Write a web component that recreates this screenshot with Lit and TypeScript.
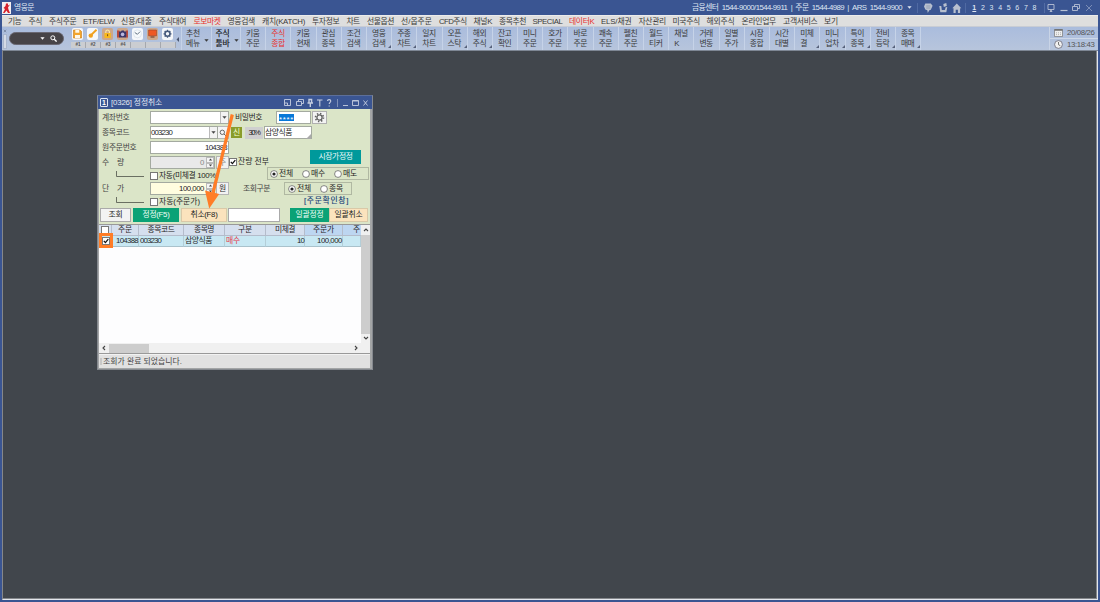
import { LitElement, html, css, svg, nothing } from "lit";
import { customElement, property } from "lit/decorators.js";

/** Single-line text whose tracking is adjusted to fill a given width. */
@customElement("fit-text")
class FitText extends LitElement {
  static styles = css`
    :host { display: block; flex: none; white-space: pre; overflow: visible; }
    .t { display: inline-block; white-space: pre; }
  `;
  @property({ type: Number }) w = 0;
  @property() text = "";
  render() {
    return html`<span class="t">${this.text}</span>`;
  }
  updated() {
    const s = this.renderRoot.querySelector(".t") as HTMLElement;
    s.style.letterSpacing = "0px";
    const n = [...this.text].length;
    const natural = s.getBoundingClientRect().width;
    s.style.letterSpacing = (this.w - natural) / n + "px";
    this.style.width = this.w + "px";
  }
}

const t = (text: string, w: number, cls = "") =>
  html`<fit-text class=${cls} .text=${text} .w=${w}></fit-text>`;

const menu: [string, number, number, boolean?][] = [
  ["기능", 8, 13], ["주식", 28.5, 13.5], ["주식주문", 49, 27.5], ["ETF/ELW", 83, 31.5],
  ["신용/대출", 121, 31], ["주식대여", 159, 27], ["로보마켓", 193.5, 27, true], ["영웅검색", 227.5, 27.5],
  ["캐치(KATCH)", 262, 43], ["투자정보", 312, 27.5], ["차트", 346.5, 13], ["선물옵션", 367, 27],
  ["선/옵주문", 401, 31], ["CFD주식", 439, 27.5], ["채널K", 473.5, 18.5], ["종목추천", 499, 27],
  ["SPECIAL", 532.5, 30], ["데이터K", 569, 25.5, true], ["ELS/채권", 601, 30.5], ["자산관리", 638.5, 27.5],
  ["미국주식", 672.5, 27.5], ["해외주식", 706.5, 28], ["온라인업무", 741.5, 34.5], ["고객서비스", 783, 34.5],
  ["보기", 824, 14],
];

const tools: [string, string, boolean?, boolean?][] = [
  ["키움", "주문"], ["주식", "종합", false, true], ["키움", "현재"], ["관심", "종목"], ["조건", "검색"],
  ["영웅", "검색", true], ["주종", "차트", true], ["일지", "차트"], ["오픈", "스탁", true], ["해외", "주식", true],
  ["잔고", "확인"], ["미니", "주문"], ["호가", "주문"], ["바로", "주문"], ["쾌속", "주문"], ["펠친", "주문"],
  ["월드", "티커"], ["채널", "K"], ["거래", "변동"], ["일별", "주가"], ["시장", "종합"], ["시간", "대별"],
  ["미체", "결", true], ["미니", "업차", true], ["특이", "종목", true], ["전비", "등락", true], ["종목", "매매", true],
];

const quick = [
  svg`<path d="M1.5 2h6.5l1.5 1.5V10h-8z" fill="#f3a52c" stroke="#c97a18" stroke-width=".6"/><path d="M3.3 2h4v2.7h-4zM3 7h5v3H3z" fill="#fff8e8"/>`,
  svg`<path d="M9.5 1.8 4.5 6.6" stroke="#f0a01e" stroke-width="2"/><circle cx="3.8" cy="7.6" r="2.2" fill="#f0a01e"/>`,
  svg`<path d="M3.8 5.5V3.8a1.8 1.8 0 0 1 3.6 0v1.7" fill="none" stroke="#ffe9a0" stroke-width="1.1"/><path d="M2.4 5h6.4v5H2.4z" fill="#f8b81c"/><path d="M5.6 6.2v2" stroke="#7b4a18"/>`,
  svg`<path d="M0 2.5h2.5v7H0zM8.8 2.5H11v7H8.8z" fill="#b84b3d"/><path d="M2 3.5h2l.6-1h2.2l.6 1h1.8v6H2z" fill="#3a3568"/><circle cx="5.6" cy="6.4" r="1.8" fill="#b9b6dd"/>`,
  svg`<circle cx="5.5" cy="5.8" r="4" fill="#f6f9fb" stroke="#d5dfe6" stroke-width=".7"/><path d="M2.8 4.5 5.4 6.3 8 3.7" fill="none" stroke="#567" stroke-width=".9"/>`,
  svg`<path d="M1.6 2h7.9v5.8H1.6z" fill="#ee5824" stroke="#9b4329" stroke-width=".6"/><path d="M3.5 9h4" stroke="#7b4430" stroke-width="1.2"/>`,
  svg`<circle cx="5.5" cy="5.8" r="2.5" fill="none" stroke="#465a7c" stroke-width="1.6"/><path d="M5.5 1.8v1.4M5.5 8.4v1.4M1.5 5.8h1.4M8.1 5.8h1.4M2.7 3l1 1M7.3 7.6l1 1M8.3 3l-1 1M3.7 7.6l-1 1" stroke="#465a7c" stroke-width="1.3"/>`,
];

const arrowDown = html`<svg width="5" height="3" viewBox="0 0 5 3"><path d="M.4.2h4.2L2.5 2.8z" fill="currentColor"/></svg>`;
const spin = html`<span class="spin"><i><svg width="5" height="3" viewBox="0 0 5 3"><path d="M.9 2.5h3.2L2.5.6z" fill="#444"/></svg></i><i><svg width="5" height="3" viewBox="0 0 5 3"><path d="M.9.5h3.2L2.5 2.4z" fill="#444"/></svg></i></span>`;
const check = (on = false) => html`<span class="check">${on
  ? html`<svg width="6" height="6" viewBox="0 0 6 6"><path d="M.8 2.9 2.4 4.6 5.3 1.2" fill="none" stroke="#111" stroke-width="1.3"/></svg>` : nothing}</span>`;
const radio = (on = false) => html`<svg class="radio" width="8" height="8" viewBox="0 0 8 8"><circle cx="4" cy="4" r="3.4" fill="#fff" stroke="#555" stroke-width=".7"/>${on ? svg`<circle cx="4" cy="4" r="1.6" fill="#222"/>` : nothing}</svg>`;
const branch = html`<svg class="branch" width="28" height="7" viewBox="0 0 28 7"><path d="M.5 0v5.5H28" fill="none" stroke="#4c5148" stroke-width=".8"/></svg>`;

@customElement("order-window")
class OrderWindow extends LitElement {
  static styles = css`
    :host { display: block; box-sizing: border-box; width: 276px; height: 275px; background: #a3a5a6; border: 1px solid #85898f; border-top-color: #5c6f9a; color: #262626; line-height: 10px; }
    * { box-sizing: border-box; }
    svg { display: block; flex: none; }
    .title { height: 13px; background: #3a5592; display: flex; align-items: center; color: #e2e8f3; padding: 0 3px 0 2px; }
    .num { width: 8px; height: 9px; border: 1px solid #dfe6f2; border-radius: 1px; color: #fff; font: bold 7px/7px "Liberation Sans", sans-serif; text-align: center; margin-right: 3px; }
    .title svg { margin-left: auto; }
    .body { margin: 0 2px 0 1px; height: 259px; display: flex; flex-direction: column; background: #dbe5c8; }
    .form { display: flex; height: 97px; flex: none; }
    .left { width: 130px; padding: 2px 0 0 3px; display: flex; flex-direction: column; flex: none; }
    .right { flex: 1; min-width: 0; padding-top: 2px; }
    .row { display: flex; align-items: center; height: 13px; margin-bottom: 2px; flex: none; }
    .left .row > fit-text:first-child { margin-right: auto; color: #444; }
    .price { margin-top: 1px; }
    .sub { display: flex; height: 10px; padding-left: 14px; align-items: center; flex: none; }
    .sub .branch { margin: -3px 6px 0 0; }
    .sub fit-text { margin-left: 1px; }
    .field { height: 13px; border: 1px solid #a4aaa0; background: #fff; display: flex; align-items: center; flex: none; }
    .w79 { width: 79px; } .w68 { width: 68px; } .w65 { width: 65px; }
    .field .dd { margin-left: auto; width: 8px; height: 11px; border-left: 1px solid #bbb; background: #f3f3f3; display: grid; place-items: center; color: #444; }
    .end { justify-content: flex-end; padding-right: 1px; }
    .gray { background: #e9e9e9; color: #888; }
    .yellow { background: #fffde0; }
    .spin { width: 8px; height: 11px; display: flex; flex-direction: column; margin-left: 2px; margin-right: -1px; }
    .spin i { flex: 1; border: 1px solid #bbb; background: #f5f5f5; display: grid; place-items: center; }
    .unit { width: 13px; height: 13px; margin-left: 1px; border: 1px solid #b5b5b5; background: #f2f2f2; display: grid; place-items: center; flex: none; }
    .look { width: 11px; height: 13px; border: 1px solid #b5b5b5; border-left: 0; background: #f5f5f5; display: grid; place-items: center; }
    .check { width: 8px; height: 8px; border: 1px solid #777; background: #fff; display: grid; place-items: center; flex: none; }
    .pwrow { padding-left: 6px; }
    .pw { width: 35px; margin-left: 14px; padding-left: 2px; }
    .stars { color: #fff; width: 15px; background: linear-gradient(#0878d8, #0878d8) center / 15px 7px no-repeat; }
    .stars fit-text { margin-top: 2px; margin-bottom: -2px; }
    .gear { width: 15px; height: 13px; margin-left: 1px; border: 1px solid #b0b0b0; background: #f3f3f3; display: grid; place-items: center; }
    .badge { width: 11px; height: 11px; margin-left: 2px; background: #8a9c2a; color: #f4ffd5; display: grid; place-items: center; }
    .pct { width: 18px; height: 12px; margin: 0 1px 0 3px; background: #cfcfcf; display: grid; place-items: center; }
    .name { width: 48px; }
    .name svg { margin: 7px 0 0 auto; }
    .teal { width: 51px; height: 14px; background: #00999b; color: #effafa; display: grid; place-items: center; margin: 11px 0 0 81px; }
    .all { display: flex; height: 10px; align-items: center; margin-top: -7px; }
    .all fit-text { margin-left: 1px; }
    .group { border: 1px solid #b0b8a2; height: 13px; display: flex; align-items: center; padding-left: 2px; }
    .group .radio { margin-right: 1px; }
    .group fit-text { margin-right: 9px; }
    .g1 { width: 102px; margin: 0 0 0 38px; }
    .qrow { display: flex; align-items: center; padding-left: 14px; margin-top: 2px; color: #444; }
    .g2 { width: 68px; margin-left: 14px; padding-left: 3px; color: #262626; }
    .link { color: #173f78; margin: 1px 0 0 75px; -webkit-text-stroke: .15px #173f78; }
    .actions { height: 18px; display: flex; align-items: center; padding: 0 1px; flex: none; }
    .btn { height: 14px; border: 1px solid #aaa; background: #f3f3f3; display: grid; place-items: center; flex: none; color: #222; }
    .green { background: #0aa276; border-color: #0aa276; color: #effff7; }
    .cream { background: #fbe3bd; border-color: #d9c9a8; }
    .grid { height: 130px; background: #fdfdfe; display: grid; grid-template-columns: 1fr 9px; grid-template-rows: 1fr 10px; border-top: 1px solid #999; border-bottom: 1px solid #999; flex: none; }
    .table { overflow: hidden; min-width: 0; }
    .tr { display: grid; grid-template-columns: 13px 27px 45px 41px 41px 39px 38px 18px; grid-template-rows: 11px; height: 11px; }
    .th > * { background: #d5dfee; border-right: 1px solid #b4bccb; border-bottom: 1px solid #b4bccb; display: grid; place-items: center; }
    .th > .hot { background: #bdd6f1; }
    .th > .far { place-items: center end; border-right: 0; padding-right: 1px; }
    .td > * { background: #c8e8f3; border-right: 1px solid #b4ced8; border-bottom: 1px solid #a9c2cc; display: flex; align-items: center; padding-left: 1px; }
    .td > .end { padding: 0; }
    .td > .mid { justify-content: center; }
    .red { color: #e6384a; }
    .vs, .hs { background: #f0f0f0; display: flex; align-items: center; }
    .vs { flex-direction: column; justify-content: space-between; padding: 3px 0; }
    .vs i { width: 9px; height: 99px; background: #cdcdcd; }
    .hs { grid-column: 1 / 3; padding: 0 12px 0 3px; }
    .hs i { width: 40px; height: 9px; background: #cdcdcd; margin-left: 3px; }
    .hs .r { margin-left: auto; }
    .status { flex: 1; background: #e1e1e1; display: flex; align-items: center; padding-left: 1px; border-top: 1px solid #f2f2f2; color: #444; }
    .status i { width: 2px; height: 7px; background: #c8c8c8; margin-right: 1px; }
  `;
  render() {
    return html`
      <div class="title">
        <span class="num">1</span>${t("[0326] 정정취소", 51)}
        <svg width="86" height="10" viewBox="0 0 86 10" fill="none" stroke="#c5cee0" stroke-width=".9">
          <path d="M1.5 1.5h6v6h-6zM1.5 5h3v2.5M13.5 3.5h5v4h-5zM15.5 3.5v-2h5v4h-2"/>
          <path d="M25.3 1.5h4M26 1.5v3M28.6 1.5v3M24.5 5h5.5M27.3 5v4" stroke-width="1.4"/>
          <path d="M34 2h5.5M36.8 2v6.5M44.5 3c0-1.9 3.3-1.9 3.3 0 0 1.3-1.6 1.4-1.6 3M46.2 7.5v1" stroke-width="1.1"/>
          <path d="M54.5 1v8" opacity=".55"/><path d="M60 7.5h5M69.5 2.5h6v5h-6zM69.5 3h6M80.5 2.5l4 5M84.5 2.5l-4 5"/>
        </svg>
      </div>
      <div class="body">
        <div class="form">
          <div class="left">
            <div class="row">${t("계좌번호", 27.5)}<span class="field w79"><span class="dd">${arrowDown}</span></span></div>
            <div class="row">${t("종목코드", 27.5)}<span class="field w68">${t("003230", 21)}<span class="dd">${arrowDown}</span></span><span class="look"><svg width="8" height="8" viewBox="0 0 8 8" fill="none" stroke="#555" stroke-width=".9"><circle cx="3.3" cy="3.3" r="2.2"/><path d="m5 5 2.4 2.4"/></svg></span></div>
            <div class="row">${t("원주문번호", 34.5)}<span class="field w79 end">${t("104388", 22)}</span></div>
            <div class="row">${t("수    량", 22)}<span class="field w65 end gray">${t("0", 4)}${spin}</span><span class="unit gray">${t("주", 7)}</span></div>
            <div class="sub">${branch}${check()}${t("자동(미체결 100%)", 59)}</div>
            <div class="row price">${t("단    가", 22)}<span class="field w65 end yellow">${t("100,000", 25)}${spin}</span><span class="unit">${t("원", 7)}</span></div>
            <div class="sub">${branch}${check()}${t("자동(주문가)", 41)}</div>
          </div>
          <div class="right">
            <div class="row pwrow">${t("비밀번호", 27)}<span class="field pw"><span class="stars">${t("****", 15)}</span></span><span class="gear"><svg width="11" height="11" viewBox="0 0 11 11" fill="none" stroke="#626262"><circle cx="5.5" cy="5.5" r="2.6" stroke-width="1.3"/><circle cx="5.5" cy="5.5" r="4" stroke-width="1.6" stroke-dasharray="1.4 1.74"/></svg></span></div>
            <div class="row"><span class="badge">${t("신", 7)}</span><span class="pct">${t("30%", 11)}</span><span class="field name">${t("삼양식품", 27)}<svg width="5" height="5" viewBox="0 0 5 5"><path d="M5 0v5H0z" fill="#aaa"/></svg></span></div>
            <div class="teal">${t("시장가정정", 34)}</div>
            <div class="all">${check(true)}${t("잔량 전부", 31)}</div>
            <div class="group g1">${radio(true)}${t("전체", 14)}${radio()}${t("매수", 14)}${radio()}${t("매도", 14)}</div>
            <div class="qrow">${t("조회구분", 27)}<span class="group g2">${radio(true)}${t("전체", 14)}${radio()}${t("종목", 14)}</span></div>
            <div class="link">${t("[주문확인창]", 45)}</div>
          </div>
        </div>
        <div class="actions">
          <span class="btn" style="width:31px">${t("조회", 14)}</span>
          <span class="btn green" style="width:46px;margin-left:2px">${t("정정(F5)", 27)}</span>
          <span class="btn cream" style="width:46px;margin-left:2px">${t("취소(F8)", 27)}</span>
          <span class="btn" style="width:52px;margin-left:1px;background:#fff"></span>
          <span class="btn green" style="width:39px;margin-left:10px">${t("일괄정정", 28)}</span>
          <span class="btn cream" style="width:39px">${t("일괄취소", 28)}</span>
        </div>
        <div class="grid">
          <div class="table">
            <div class="tr th"><span>${check()}</span><span>${t("주문", 14)}</span><span>${t("종목코드", 27)}</span><span>${t("종목명", 20)}</span><span>${t("구분", 14)}</span><span>${t("미체결", 20)}</span><span class="hot">${t("주문가", 21)}</span><span class="hot far">${t("주", 7)}</span></div>
            <div class="tr td"><span class="mid">${check(true)}</span><span class="end">${t("104388", 22)}</span><span>${t("003230", 21)}</span><span>${t("삼양식품", 27)}</span><span class="red">${t("매수", 14)}</span><span class="end">${t("10", 7)}</span><span class="end">${t("100,000", 25)}</span><span></span></div>
          </div>
          <div class="vs">
            <svg width="6" height="4" viewBox="0 0 6 4"><path d="m1 3 2-2 2 2" fill="none" stroke="#444" stroke-width="1.1"/></svg><i></i>
            <svg width="6" height="4" viewBox="0 0 6 4"><path d="m1 1 2 2 2-2" fill="none" stroke="#444" stroke-width="1.1"/></svg>
          </div>
          <div class="hs">
            <svg width="4" height="6" viewBox="0 0 4 6"><path d="M3 1 1 3l2 2" fill="none" stroke="#444" stroke-width="1.1"/></svg><i></i>
            <svg class="r" width="4" height="6" viewBox="0 0 4 6"><path d="m1 1 2 2-2 2" fill="none" stroke="#444" stroke-width="1.1"/></svg>
          </div>
        </div>
        <div class="status"><i></i>${t("조회가 완료 되었습니다.", 79)}</div>
      </div>`;
  }
}

@customElement("app-root")
class AppRoot extends LitElement {
  static styles = css`
    :host { display: flex; flex-direction: column; box-sizing: border-box; width: 1100px; height: 602px; overflow: hidden; background: #3a5592; font: 7.8px/10px "Liberation Sans", "Noto Sans CJK KR", sans-serif; color: #3a3a3a; }
    * { box-sizing: border-box; }
    svg { display: block; flex: none; }
    .top { height: 15px; display: flex; align-items: center; color: #dfe6f2; padding-left: 2px; flex: none; }
    .top .brand { margin-left: 3px; }
    .top .tel { margin-left: auto; display: flex; align-items: center; gap: 5px; width: 222px; }
    .icons { width: 56px; display: flex; }
    .nums { display: flex; width: 74px; font: 7px/10px "Liberation Sans", sans-serif; }
    .nums span { width: 8.6px; text-align: center; }
    .nums .on { font-weight: bold; text-decoration: underline; }
    .menu { height: 12px; margin: 0 2px; background: #dedede; display: grid; border-bottom: 1px solid #c8ccd4; border-top: 1px solid #ebebeb; flex: none; }
    .menu div { grid-area: 1 / 1; line-height: 11px; }
    .red { color: #e8322e; }
    .bar { height: 24px; margin: 0 2px; display: flex; background: linear-gradient(#aabcdd, #b7c5dc); flex: none; border-bottom: 1px solid #7e8794; }
    .grip { width: 7px; padding: 2px 0 0 1px; }
    .pill { width: 55px; height: 13px; margin: 5px 0 0 0; border-radius: 7px; background: #474447; border: 1px solid #6a6872; color: #fff; display: flex; align-items: center; justify-content: flex-end; gap: 5px; padding-right: 6px; }
    .quick { width: 106px; margin-left: 7px; padding-top: 1px; }
    .qi { display: flex; padding-left: 1px; gap: 4px; }
    .q { width: 11px; height: 12px; background: #f5f7fa; border-radius: 2px; }
    .q.tan { background: #cda789; }
    .slots { display: flex; margin-top: 2px; }
    .slots span { width: 15px; height: 6px; border-right: 1px solid #a5a8ae; background: #cbcdd1; font: bold 4.5px/6px "Liberation Sans", sans-serif; text-align: center; color: #555; flex: none; }
    .more { width: 5px; padding-top: 10px; color: #4a5670; margin-left: -1px; }
    .item { flex: none; border-left: 1px solid #c6d3e8; display: flex; padding: 2px 0 0 5px; width: 25.2px; position: relative; }
    .item.wide { width: 29.5px; padding-left: 4px; }
    .wide svg { margin: 10px 0 0 4px; }
    .bold { color: #111; -webkit-text-stroke: .15px #111; }
    .corner { position: absolute; right: 0; bottom: 2px; }
    .clock { margin-left: auto; width: 49px; border-left: 1px solid #c9d4e6; flex: none; color: #555; }
    .clock div { height: 11px; display: flex; align-items: center; padding-left: 4px; gap: 4px; }
    .clock div + div { border-top: 1px solid #ced8e8; height: 12px; }
    .last { border-left: 1px solid #c6d3e8; }
    .desk { flex: 1; margin: 0 2px 2px 2px; background: #41464c; border: 0 solid #e3e6ec; border-width: 0 1px 1px; border-left-color: #85878a; box-shadow: inset -1px -1px #84878b; position: relative; }
    .win { position: absolute; left: 94px; top: 44px; }
    .anno { position: absolute; left: 89px; top: 50px; }
  `;
  render() {
    return html`
      <div class="top">
        <svg width="9" height="12" viewBox="0 0 9 12"><path d="M0 0h9v12H0z" fill="#f5efef"/><path d="M4 1.5h2v2l2-1-2 3 .5 2L8 11H6L4.5 8.5 2.5 11H1l2-4-1.5-1 2-2z" fill="#d6202b"/></svg>
        <div class="brand">${t("영웅문", 20)}</div>
        <div class="tel">${t("금융센터  1544-9000/1544-9911  |  주문  1544-4989  |  ARS  1544-9900", 210)}${arrowDown}</div>
        <div class="icons">
          <svg width="56" height="12" viewBox="0 0 56 12" fill="#b8c0cf">
            <path d="M3.5 1v10M51.5 1v10" stroke="#5670a7" stroke-width=".8"/>
            <g transform="translate(4.3 0)">
              <path d="M7 1.5h5.5l1.8 2.3-1.8 4-1.5.4L9.5 11 9 8.2l-2-.6-1.3-3z"/><path d="M8 4h4M8 6h4" stroke="#7986a2" stroke-width=".6"/>
              <path d="M21 4h2l.5 4h3l1-3 1.5.3-1 5h-6zM25 2l3-1 .5 3-3 1z"/>
              <path d="m34 6.2 4.5-4.7L43 6.2h-1.2V11h-2.2V7.8h-2.2V11h-2.2V6.2z"/>
            </g>
          </svg>
        </div>
        <div class="nums">${[1, 2, 3, 4, 5, 6, 7, 8].map((n) => html`<span class=${n === 1 ? "on" : ""}>${n}</span>`)}</div>
        <svg width="56" height="12" viewBox="0 0 56 12" fill="none" stroke="#b7c1d5" stroke-width=".9">
          <path d="M.5 1v10" stroke="#5670a7"/><path d="M4 2.5h6v5H4zM6 9.5 7 8l1 1.5z"/><path d="M16.5 8.5h7" stroke-width="1.2"/>
          <path d="M28.5 4.5h5v4h-5zM30.5 4.5v-2h5v4h-2"/><path d="m42 3 6 6M48 3l-6 6" stroke="#8395bb"/>
        </svg>
      </div>
      <div class="menu">${menu.map(([s, x, w, r]) => html`<div class=${r ? "red" : ""} style="padding-left:${x - 2}px">${t(s, w)}</div>`)}</div>
      <div class="bar">
        <div class="grip"><svg width="4" height="20" viewBox="0 0 4 20"><path d="m.8.8 2.4 2.4M3.2.8.8 3.2" stroke="#6f7c95" stroke-width=".7"/><path d="M.5 5.5v14h3v-14z" fill="#d4dae5" stroke="#98a6bf" stroke-width=".6"/></svg></div>
        <div class="pill">${arrowDown}<svg width="7" height="7" viewBox="0 0 7 7" fill="none" stroke="#fff"><circle cx="2.8" cy="2.8" r="2"/><path d="m4.3 4.3 2.3 2.3" stroke-width="1.3"/></svg></div>
        <div class="quick">
          <div class="qi">${quick.map((q, i) => html`<span class="q ${[2, 3, 5].includes(i) ? "tan" : ""}"><svg width="11" height="12" viewBox="0 0 11 12">${q}</svg></span>`)}</div>
          <div class="slots">${["#1", "#2", "#3", "#4", "", "", ""].map((s) => html`<span>${s}</span>`)}</div>
        </div>
        <div class="more"><svg width="3" height="5" viewBox="0 0 3 5"><path d="M3 0v5L.5 2.5z" fill="currentColor"/></svg></div>
        <div class="item wide"><div>${t("추천", 14)}${t("메뉴", 14)}</div>${arrowDown}</div>
        <div class="item wide"><div class="bold">${t("주식", 14)}${t("툴바", 14)}</div>${arrowDown}</div>
        ${tools.map(([a, b, c, r]) => html`<div class="item ${r ? "red" : ""}"><div>${t(a, 13.5)}${t(b, b.length > 1 ? 13.5 : b === "K" ? 5 : 7)}</div>${c
          ? html`<svg class="corner" width="3" height="3" viewBox="0 0 3 3"><path d="M3 0v3H0z" fill="#56617a"/></svg>` : nothing}</div>`)}
        <div class="last"></div>
        <div class="clock">
          <div><svg width="9" height="9" viewBox="0 0 9 9"><path d="M.5 1.5h8v7h-8z" fill="#eee" stroke="#777" stroke-width=".7"/><path d="M.5 2h8" stroke="#666" stroke-width="1.4"/><path d="M2 4.8h5M2 6.6h5" stroke="#999" stroke-width=".7" stroke-dasharray="1 1"/></svg>${t("20/08/26", 27.5)}</div>
          <div><svg width="9" height="9" viewBox="0 0 9 9"><circle cx="4.5" cy="4.5" r="3.9" fill="#f1f1f1" stroke="#667" stroke-width=".8"/><path d="M4.5 2v2.7l1.8 1" fill="none" stroke="#555" stroke-width=".8"/></svg>${t("13:18:43", 27.5)}</div>
        </div>
      </div>
      <div class="desk">
        <order-window class="win"></order-window>
        <svg class="anno" width="160" height="150" viewBox="92 101 160 150">
          <path d="M232.3 114.5 213 193" stroke="#ff7d27" stroke-width="3.2"/>
          <path d="m205 190.5 14.2 3.4-10 14.6z" fill="#ff7d27"/>
          <path d="M100.5 234.5h11v12h-11z" fill="none" stroke="#ff7d27" stroke-width="3"/>
        </svg>
      </div>`;
  }
}
